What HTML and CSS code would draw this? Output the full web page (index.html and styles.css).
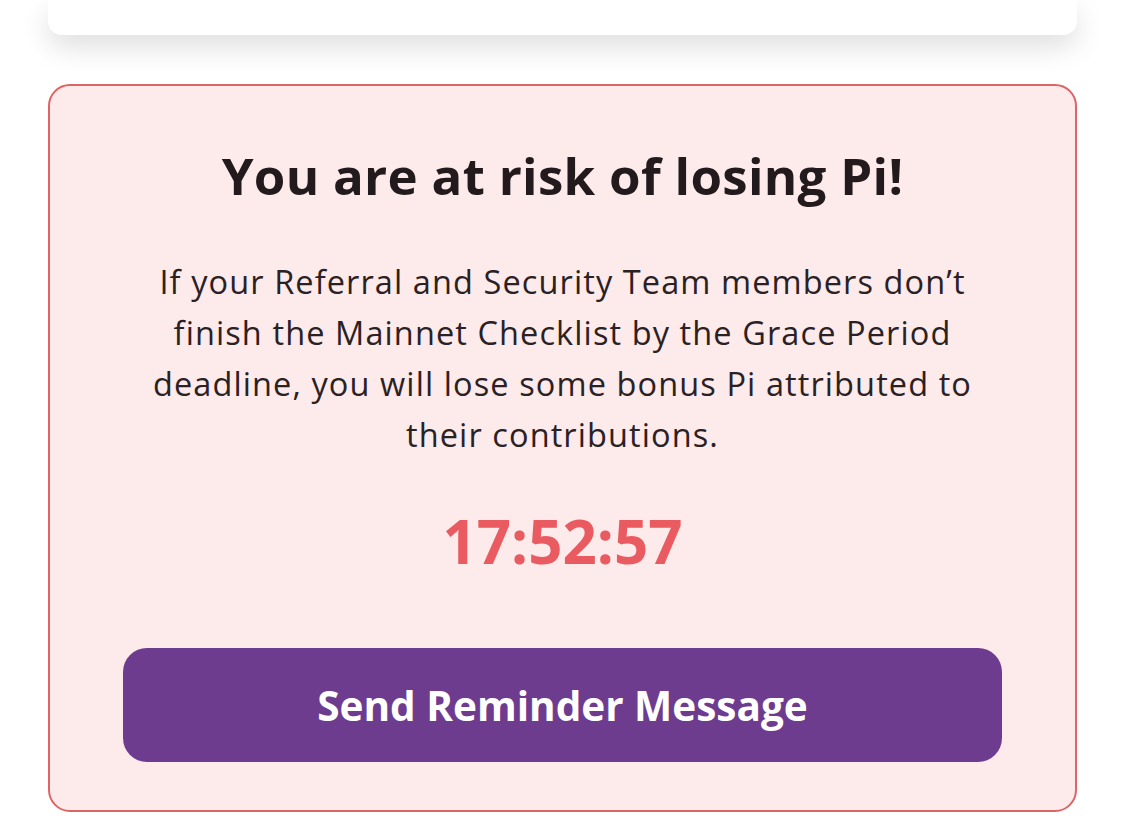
FILE: index.html
```html
<!DOCTYPE html>
<html lang="en">
<head>
<meta charset="utf-8">
<title>Grace Period</title>
<link rel="stylesheet" href="styles.css">
</head>
<body>
<div class="page">
  <div class="top-card"></div>
  <section class="risk-card">
    <h1 class="risk-title">You are at risk of losing Pi!</h1>
    <p class="risk-text">If your Referral and Security Team members don’t finish the Mainnet Checklist by the Grace Period deadline, you will lose some bonus Pi attributed to their contributions.</p>
    <div class="timer">17:52:57</div>
    <button class="reminder-btn" type="button">Send Reminder Message</button>
  </section>
</div>
</body>
</html>
```

FILE: styles.css
```css
html, body {
  margin: 0;
  padding: 0;
  background: #ffffff;
}
body {
  font-family: "Open Sans", "Noto Sans", sans-serif;
  color: #241c1f;
  overflow: hidden;
}
.page {
  width: 1125px;
  height: 834px;
  padding: 0 48px;
  box-sizing: border-box;
  display: flex;
  flex-direction: column;
  gap: 49px;
}
.top-card {
  height: 35px;
  background: #ffffff;
  border-radius: 0 0 14px 14px;
  box-shadow: 0 12px 28px rgba(0, 0, 0, 0.13);
}
.risk-card {
  height: 728px;
  box-sizing: border-box;
  background: #fdeaea;
  border: 2px solid #de6465;
  border-radius: 22px;
  padding: 56px 73px 0;
  display: flex;
  flex-direction: column;
  align-items: center;
}
.risk-title {
  margin: 0;
  font-size: 51px;
  font-weight: 700;
  line-height: 66px;
  color: #221a1d;
  text-align: center;
  letter-spacing: 0.3px;
}
.risk-text {
  margin: 48px 0 0;
  max-width: 838px;
  font-size: 32.5px;
  line-height: 51px;
  letter-spacing: 1.1px;
  text-align: center;
  color: #2a2124;
}
.timer {
  margin-top: 48px;
  font-size: 60px;
  font-weight: 700;
  line-height: 66px;
  color: #e95b61;
}
.reminder-btn {
  margin-top: 74px;
  width: 100%;
  height: 114px;
  border: none;
  border-radius: 24px;
  background: #6e3c8f;
  color: #ffffff;
  font-family: inherit;
  font-size: 40.5px;
  font-weight: 700;
  cursor: pointer;
}
```
